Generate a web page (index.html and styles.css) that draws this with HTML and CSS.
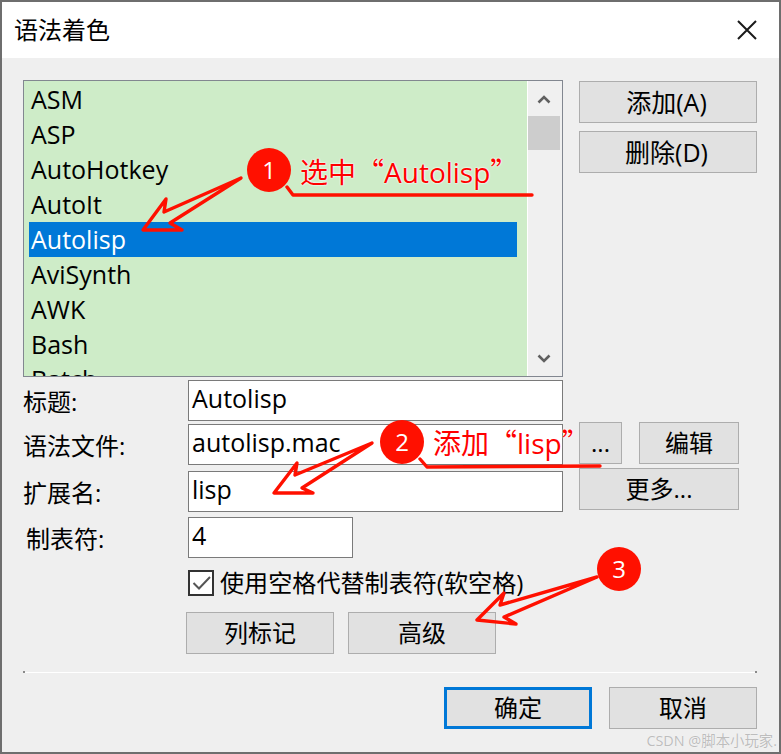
FILE: index.html
```html
<!DOCTYPE html>
<html lang="zh-CN">
<head>
<meta charset="utf-8">
<title>语法着色</title>
<link rel="stylesheet" href="styles.css">
</head>
<body>
<div class="window">
  <header class="titlebar">
    <span class="title">语法着色</span>
    <svg class="close" width="20" height="20" viewBox="0 0 20 20"><path d="M1 1L19 19M19 1L1 19"/></svg>
  </header>
  <main class="content">
    <section class="top">
      <div class="listbox">
        <ul class="items">
          <li>ASM</li>
          <li>ASP</li>
          <li>AutoHotkey</li>
          <li>AutoIt</li>
          <li class="selected">Autolisp</li>
          <li>AviSynth</li>
          <li>AWK</li>
          <li>Bash</li>
          <li>Batch</li>
        </ul>
        <div class="scrollbar">
          <svg class="chevron" width="14" height="9" viewBox="0 0 14 9"><path d="M1.5 7.5L7 2L12.5 7.5"/></svg>
          <div class="thumb"></div>
          <svg class="chevron down" width="14" height="9" viewBox="0 0 14 9"><path d="M1.5 1.5L7 7L12.5 1.5"/></svg>
        </div>
      </div>
      <div class="side">
        <button class="btn wide">添加(A)</button>
        <button class="btn wide">删除(D)</button>
      </div>
    </section>
    <section class="form">
      <div class="fields">
        <div class="row row-title"><label class="label">标题:</label><div class="input">Autolisp</div></div>
        <div class="row row-file"><label class="label">语法文件:</label><div class="input">autolisp.mac</div></div>
        <div class="row row-ext"><label class="label">扩展名:</label><div class="input">lisp</div></div>
        <div class="row row-tab"><label class="label indent">制表符:</label><div class="input short">4</div></div>
      </div>
      <div class="file-actions">
        <div class="file-top">
          <button class="btn dots">...</button>
          <button class="btn edit">编辑</button>
        </div>
        <button class="btn more">更多...</button>
      </div>
    </section>
    <div class="check-row">
      <span class="checkbox"><svg width="22" height="22" viewBox="0 0 22 22"><path d="M3.5 11L9 16.5L20 5"/></svg></span>
      <span class="check-label">使用空格代替制表符(软空格)</span>
    </div>
    <div class="adv-row">
      <button class="btn adv">列标记</button>
      <button class="btn adv">高级</button>
    </div>
    <div class="separator"></div>
    <div class="footer">
      <button class="btn adv default">确定</button>
      <button class="btn adv">取消</button>
    </div>
  </main>

  <svg class="marks" width="781" height="754" viewBox="0 0 781 754">
    <g class="outline">
      <path d="M241 178L164 212L166 199L143 230L182 230L170 223Z"/>
      <path d="M372 443L295 475L297 463L274 493L313 493L302 488Z"/>
      <path d="M597 577L500 605L504 593L477 620L516 624L504 617Z"/>
      <path d="M287 187L293 195L532 195"/>
      <path d="M420 459L427 467L600 466"/>
    </g>
    <circle class="dot" cx="269" cy="170" r="22"/>
    <circle class="dot" cx="402" cy="442" r="22"/>
    <circle class="dot" cx="619" cy="569" r="22"/>
  </svg>
  <span class="num n1">1</span>
  <span class="num n2">2</span>
  <span class="num n3">3</span>
  <span class="note note1">选中<span class="quote">“</span>Autolisp<span class="quote">”</span></span>
  <span class="note note2">添加<span class="quote">“</span>lisp<span class="quote">”</span></span>
  <span class="watermark">CSDN @脚本小玩家.</span>
</div>
</body>
</html>
```
FILE: styles.css
```css
* { box-sizing: border-box; }
html, body { margin: 0; padding: 0; }
body {
  width: 781px;
  height: 754px;
  overflow: hidden;
  font-family: "Open Sans", "Noto Sans CJK SC", sans-serif;
  font-size: 24px;
  color: #000;
}
.window {
  position: relative;
  width: 781px;
  height: 754px;
  border: 2px solid #6e6e6e;
  background: #efefef;
  display: flex;
  flex-direction: column;
}
.titlebar {
  height: 56px;
  background: #fff;
  display: flex;
  align-items: center;
  justify-content: space-between;
  padding: 0 22px 0 12px;
}
.title { font-size: 24px; line-height: 32px; margin-top: -1px; }
.close { margin-top: -1px; }
.close path { stroke: #1a1a1a; stroke-width: 2; fill: none; }
.content { flex: 1; padding: 22px 0 0 21px; }
.top { display: flex; height: 300px; }
.listbox {
  width: 540px;
  height: 297px;
  border: 1px solid #828790;
  background: #ceecc8;
  display: flex;
  overflow: hidden;
}
.items {
  list-style: none;
  margin: 0;
  padding: 1px 0 0 5px;
  width: 503px;
  height: 295px;
  overflow: hidden;
  font-size: 25px;
}
.items li {
  height: 35px;
  line-height: 34px;
  width: 488px;
  padding-left: 2px;
  white-space: nowrap;
}
.items .selected { background: #0078d7; color: #fff; }
.scrollbar {
  width: 35px;
  height: 295px;
  margin-left: auto;
  background: #f0f0f0;
  border-left: 1px solid #fff;
  display: flex;
  flex-direction: column;
  align-items: center;
  padding-right: 2px;
}
.chevron { flex: none; margin-top: 14px; }
.chevron path { fill: none; stroke: #606060; stroke-width: 2.6; }
.chevron.down { margin-top: auto; margin-bottom: 13px; }
.thumb { flex: none; width: 32px; height: 34px; margin-top: 12px; background: #cdcdcd; }
.side { display: flex; flex-direction: column; gap: 8px; margin: 1px 0 0 16px; }
.btn {
  font: inherit;
  color: #000;
  background: #e1e1e1;
  border: 1px solid #adadad;
  padding: 0;
  line-height: 1;
  display: block;
}
.wide { width: 178px; height: 42px; font-size: 25px; padding-right: 3px; }
.form { display: flex; }
.fields { width: 540px; }
.row { display: flex; align-items: center; }
.row-file { margin-top: 3px; }
.row-ext { margin-top: 6px; }
.row-tab { margin-top: 5px; }
.label { width: 165px; flex: none; line-height: 32px; position: relative; top: 1px; }
.label.indent { padding-left: 3px; }
.input {
  width: 375px;
  height: 41px;
  background: #fff;
  border: 1px solid #7a7a7a;
  padding-left: 3px;
  line-height: 35px;
  font-size: 25px;
}
.input.short { width: 165px; }
.file-actions { margin: 42px 0 0 16px; width: 160px; }
.file-top { display: flex; justify-content: space-between; }
.dots { width: 43px; height: 42px; }
.edit { width: 100px; height: 42px; }
.more { width: 160px; height: 42px; margin-top: 4px; }
.check-row { display: flex; align-items: center; margin: 12px 0 0 165px; height: 26px; }
.checkbox {
  width: 26px;
  height: 26px;
  border: 2px solid #333;
  background: #fff;
  display: flex;
  align-items: center;
  justify-content: center;
}
.checkbox path { fill: none; stroke: #555; stroke-width: 2; }
.check-label { margin-left: 6px; white-space: nowrap; line-height: 32px; font-size: 24.1px; }
.adv-row { display: flex; gap: 14px; margin: 16px 0 0 163px; }
.adv { width: 148px; height: 42px; }
.separator {
  position: relative;
  width: 734px;
  height: 1px;
  margin-top: 18px;
  background: #fff;
}
.separator::before, .separator::after {
  content: "";
  position: absolute;
  top: -1px;
  width: 2px;
  height: 2px;
  background: #8a8a8a;
}
.separator::before { left: 0; }
.separator::after { right: 0; }
.footer { display: flex; justify-content: flex-end; gap: 17px; width: 734px; margin-top: 14px; }
.default { border: 3px solid #0078d7; }
.marks { position: absolute; left: -2px; top: -2px; pointer-events: none; }
.outline path { fill: none; stroke: #ff1000; stroke-width: 3.4; stroke-linejoin: round; stroke-linecap: round; }
.dot { fill: #ff1000; }
.num {
  position: absolute;
  width: 44px;
  text-align: center;
  font-family: "Open Sans", sans-serif;
  font-size: 24px;
  line-height: 44px;
  color: #fff;
}
.n1 { left: 245px; top: 146px; }
.n2 { left: 378px; top: 418px; }
.n3 { left: 595px; top: 545px; }
.note {
  position: absolute;
  font-size: 28px;
  line-height: 36px;
  color: #ff0000;
  white-space: nowrap;
  text-shadow: 0 0 2px #fff, 0 0 2px #fff;
}
.quote { font-family: "Noto Sans CJK SC", sans-serif; }
.note1 { left: 298px; top: 151px; }
.note2 { left: 431px; top: 422px; }
.watermark {
  position: absolute;
  right: 2px;
  bottom: 1px;
  font-size: 14.4px;
  line-height: 20px;
  color: #bdbdbd;
  text-shadow: 0 0 1px #fff;
  white-space: nowrap;
}
```
